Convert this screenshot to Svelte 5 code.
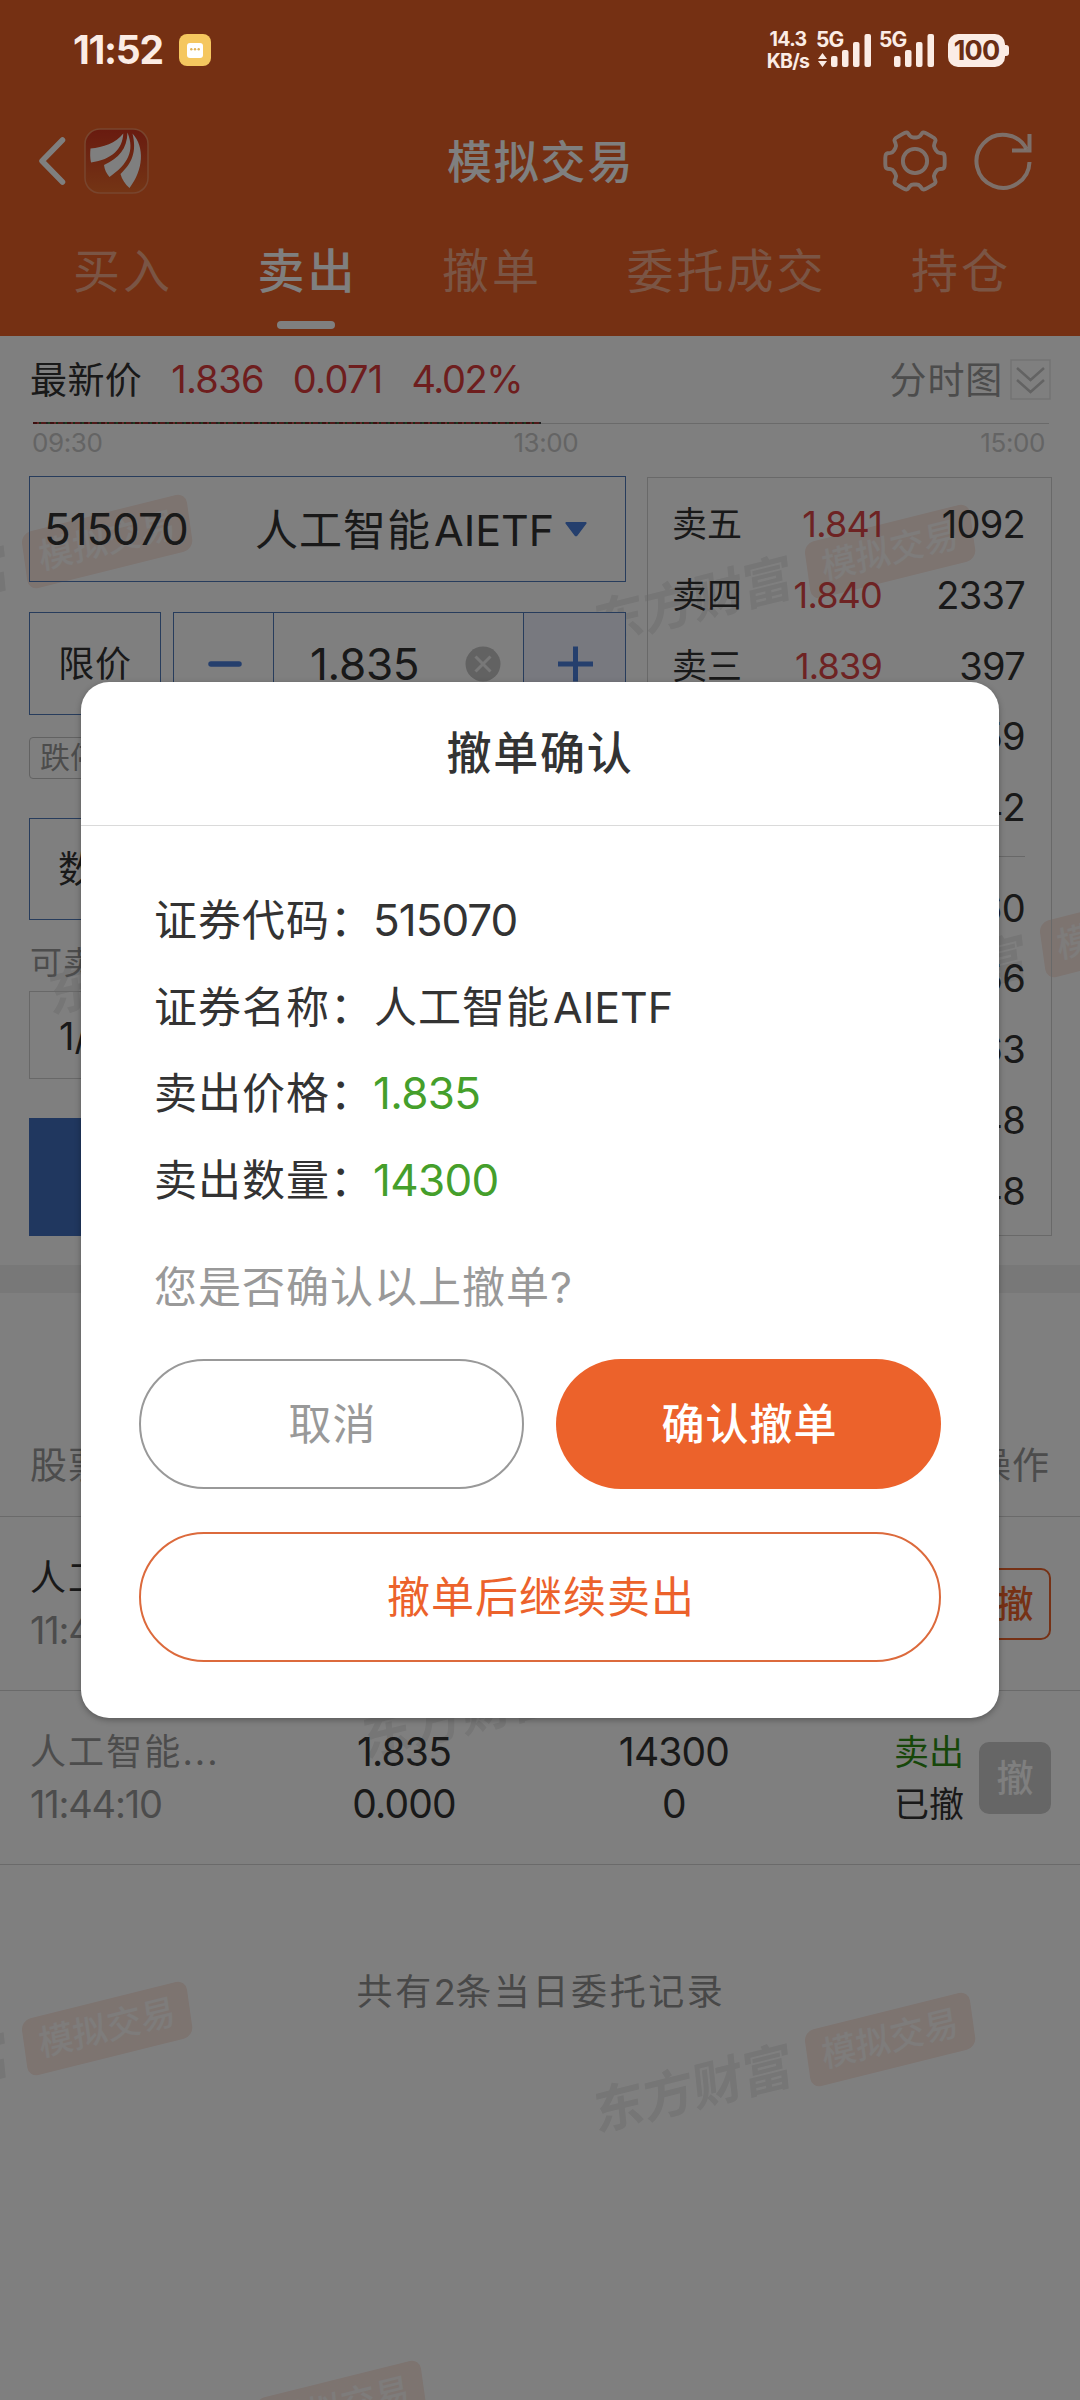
<script lang="ts">
  type Level = { label: string; price: string; volume: string };
  type Order = {
    name: string;
    time: string;
    price: string;
    avg: string;
    qty: string;
    filled: string;
    status: string;
    done: boolean;
  };

  const tabs = ["买入", "卖出", "撤单", "委托成交", "持仓"];
  let activeTab = $state("卖出");

  const asks: Level[] = [
    { label: "卖五", price: "1.841", volume: "1092" },
    { label: "卖四", price: "1.840", volume: "2337" },
    { label: "卖三", price: "1.839", volume: "397" },
    { label: "卖二", price: "1.838", volume: "659" },
    { label: "卖一", price: "1.837", volume: "142" },
  ];

  const bids: Level[] = [
    { label: "买一", price: "1.836", volume: "60" },
    { label: "买二", price: "1.835", volume: "156" },
    { label: "买三", price: "1.834", volume: "163" },
    { label: "买四", price: "1.833", volume: "248" },
    { label: "买五", price: "1.832", volume: "248" },
  ];

  const orders: Order[] = [
    { name: "人工智能", time: "11:44:38", price: "1.835", avg: "0.000", qty: "14300", filled: "0", status: "已报", done: false },
    { name: "人工智能", time: "11:44:10", price: "1.835", avg: "0.000", qty: "14300", filled: "0", status: "已撤", done: true },
  ];

  const details = [
    { label: "证券代码：", value: "515070", num: true, green: false },
    { label: "证券名称：", value: "人工智能", latin: "AIETF", num: false, green: false },
    { label: "卖出价格：", value: "1.835", num: true, green: true },
    { label: "卖出数量：", value: "14300", num: true, green: true },
  ];

  // Centres of the watermark stamps
  const marks = [
    [107, 541],
    [890, 551],
    [344, 921],
    [1125, 930],
    [658, 1665],
    [107, 2028],
    [890, 2039],
    [341, 2407],
  ];

  function gearPath(): string {
    const pts: number[][] = [];
    for (let i = 0; i < 6; i++) {
      for (const [off, r] of [[-21, 24.5], [-14, 31.5], [14, 31.5], [21, 24.5]]) {
        const a = ((i * 60 + off) * Math.PI) / 180;
        pts.push([r * Math.cos(a), r * Math.sin(a)]);
      }
    }
    // Round each corner: cut part of the way in and bend through the point
    const n = pts.length;
    let d = "";
    for (let i = 0; i < n; i++) {
      const p = pts[i];
      const [a, b] = [pts[(i + n - 1) % n], pts[(i + 1) % n]].map((q) => [p[0] + (q[0] - p[0]) * 0.3, p[1] + (q[1] - p[1]) * 0.3]);
      d += `${i ? "L" : "M"}${a[0].toFixed(1)} ${a[1].toFixed(1)}Q${p[0].toFixed(1)} ${p[1].toFixed(1)} ${b[0].toFixed(1)} ${b[1].toFixed(1)}`;
    }
    return d + "Z";
  }
</script>

{#snippet signal()}
  <svg class="signal" width="40" height="33" viewBox="0 0 40 33" fill="currentColor">
    <rect x="0" y="22" width="6.5" height="11" rx="2" />
    <rect x="11" y="16" width="6.5" height="17" rx="2" />
    <rect x="22" y="8" width="6.5" height="25" rx="2" />
    <rect x="33.5" y="0" width="6.5" height="33" rx="2" />
  </svg>
{/snippet}

{#snippet levels(rows: Level[])}
  {#each rows as row}
    <div class="level">
      <span class="level-label">{row.label}</span>
      <span class="level-price">{row.price}</span>
      <span class="level-volume">{row.volume}</span>
    </div>
  {/each}
{/snippet}

<div class="app">
  {#each marks as [x, y]}
    <div class="mark" style:left="{x}px" style:top="{y}px">
      <span class="mark-brand">东方财富</span>
      <span class="mark-stamp">模拟交易</span>
    </div>
  {/each}

  <header>
    <div class="status">
      <span class="clock">11:52</span>
      <svg width="32" height="32" viewBox="0 0 32 32">
        <rect width="32" height="32" rx="8" fill="#f5c75f" />
        <rect x="8" y="9" width="16" height="15" rx="3" fill="#fff" />
        <g fill="#e0b257">
          <circle cx="12.3" cy="15.3" r="1.2" /><circle cx="16" cy="15.3" r="1.2" /><circle cx="19.7" cy="15.3" r="1.2" />
        </g>
      </svg>
      <div class="status-right">
        <div class="speed"><span>14.3</span><span>KB/s</span></div>
        <div class="net">
          <span>5G</span>
          <svg class="updown" width="9" height="14" viewBox="0 0 9 14" fill="currentColor">
            <path d="M4.5 0L9 6H0zM4.5 14L0 8h9z" />
          </svg>
          {@render signal()}
        </div>
        <div class="net">
          <span>5G</span>
          {@render signal()}
        </div>
        <div class="battery"><span>100</span></div>
      </div>
    </div>

    <div class="nav">
      <svg width="28" height="50" viewBox="0 0 28 50" fill="none" stroke="#fff" stroke-width="5.5" stroke-linecap="round" stroke-linejoin="round">
        <path d="M24.5 4L4 25l20.5 21" />
      </svg>
      <svg class="logo" width="66" height="66" viewBox="0 0 66 66">
        <defs>
          <linearGradient id="logo-bg" x1="0" y1="0" x2="0" y2="1">
            <stop offset="0" stop-color="#d2361f" />
            <stop offset="1" stop-color="#e96a2a" />
          </linearGradient>
        </defs>
        <rect x="1" y="1" width="63" height="64" rx="15" fill="url(#logo-bg)" stroke="#f08a5c" stroke-width="1.5" />
        <g fill="#fff">
          <path d="M6.500 20.500C19 19.500 32 15 39.300 5.500C38.500 21 28 31.500 7 34.500C6 30 6 25 6.500 20.500Z" />
          <path d="M43.500 4.500C51 23 44 36 25.500 49C22.500 45.500 20.500 41.500 20 37C35 30 43 21 43.500 4.500Z" />
          <path d="M48.500 5.500C61 19 59.500 42 45.500 60C41 56 38 51.500 36.500 46C48 35 53 24 48.500 5.500Z" />
        </g>
      </svg>
      <h1>模拟交易</h1>
      <svg class="gear" width="66" height="66" viewBox="-34 -34 68 68" fill="none" stroke="#fff" stroke-opacity="0.8" stroke-width="4" stroke-linejoin="round">
        <path d={gearPath()} />
        <circle r="12.5" />
      </svg>
      <svg width="62" height="62" viewBox="-31 -31 62 62" fill="none" stroke="#fff" stroke-opacity="0.8" stroke-width="4">
        <path d="M26.5 1A26.500 26.500 0 1 1 23.500 -12" />
        <path d="M26.500 -27V-10.500H9" />
      </svg>
    </div>

    <nav class="tabs">
      {#each tabs as tab}
        <button class="tab" class:active={tab === activeTab} onclick={() => (activeTab = tab)}>{tab}</button>
      {/each}
    </nav>
  </header>

  <section class="quote">
    <span class="quote-label">最新价</span>
    <span class="quote-num">1.836</span>
    <span class="quote-num">0.071</span>
    <span class="quote-num pct">4.02%</span>
    <span class="chart-link">分时图</span>
    <svg width="41" height="41" viewBox="0 0 41 41" fill="none">
      <rect x="1" y="1" width="39" height="39" stroke="#e6e6e6" stroke-width="1.5" />
      <path d="M7 9l13.500 12L34 9M7 21l13.500 12L34 21" stroke="#c6c6c6" stroke-width="2.5" />
    </svg>
  </section>
  <div class="baseline"><div class="ticks"></div></div>
  <div class="times"><span>09:30</span><span class="noon">13:00</span><span>15:00</span></div>

  <section class="trade">
    <div class="form">
      <div class="box code">
        <span class="code-num">515070</span>
        <span class="code-name">人工智能<em>AIETF</em></span>
        <svg width="22" height="15" viewBox="0 0 22 15"><path d="M1.5 0h19a1 1 0 0 1 1 1.5L12.5 13.5a2 2 0 0 1-3 0L.5 1.5A1 1 0 0 1 1.5 0z" fill="#4a7edb" /></svg>
      </div>
      <div class="price-row">
        <div class="box kind">限价</div>
        <div class="box stepper">
          <svg width="99" height="101" viewBox="0 0 99 101" stroke="#4a7edb" stroke-width="5.5" stroke-linecap="round"><path d="M37 51h28" /></svg>
          <div class="price">
            <span>1.835</span>
            <svg width="36" height="36" viewBox="0 0 36 36">
              <circle cx="18" cy="18" r="17.5" fill="#c4c4c4" />
              <path d="M10.5 10.5l15 15M25.5 10.5l-15 15" stroke="#f0f0f0" stroke-width="3" />
            </svg>
          </div>
          <svg class="plus" width="101" height="101" viewBox="0 0 101 101" stroke="#4a7edb" stroke-width="5"><path d="M34 51h35M51.5 33.5v35" /></svg>
        </div>
      </div>
      <div class="limit">跌停</div>
      <div class="box qty">数量</div>
      <div class="avail">可卖</div>
      <div class="parts">1/4</div>
      <div class="submit"></div>
    </div>
    <div class="book">
      {@render levels(asks)}
      <div class="book-line"></div>
      {@render levels(bids)}
    </div>
  </section>

  <div class="band"></div>

  <section class="orders">
    <div class="orders-head"><span>股票</span><span>操作</span></div>
    {#each orders as order}
      <div class="order" class:done={order.done}>
        <div><span class="name">{order.name}...</span><span class="time">{order.time}</span></div>
        <div class="mid"><span>{order.price}</span><span>{order.avg}</span></div>
        <div class="mid"><span>{order.qty}</span><span>{order.filled}</span></div>
        <div class="side"><span class="sell">卖出</span><span>{order.status}</span></div>
        <button class="cancel">撤</button>
      </div>
    {/each}
    <p class="total">共有<em>2</em>条当日委托记录</p>
  </section>

  <div class="overlay">
    <div class="dialog">
      <h2>撤单确认</h2>
      <div class="dialog-body">
        {#each details as d}
          <div class="detail">
            <span>{d.label}</span>
            <span class:num={d.num} class:green={d.green}>{d.value}{#if d.latin}<em>{d.latin}</em>{/if}</span>
          </div>
        {/each}
        <p>您是否确认以上撤单?</p>
      </div>
      <div class="actions">
        <button class="btn ghost">取消</button>
        <button class="btn primary">确认撤单</button>
        <button class="btn outline">撤单后继续卖出</button>
      </div>
    </div>
  </div>
</div>

<style>
  :global(body) {
    background: #808080;
  }

  .app {
    position: relative;
    width: 1080px;
    height: 2400px;
    overflow: hidden;
    background: #fff;
    color: #333;
    font-family: "Inter", "Noto Sans CJK SC", sans-serif;
    isolation: isolate;
  }

  button {
    font-family: inherit;
    padding: 0;
    margin: 0;
    border: none;
    background: none;
    color: inherit;
  }

  em {
    font-style: normal;
    letter-spacing: -0.5px;
  }

  .mark {
    position: absolute;
    z-index: -1;
    display: flex;
    align-items: center;
    gap: 8px;
    width: 390px;
    margin-left: -305px;
    margin-top: -28px;
    transform: rotate(-14deg);
    transform-origin: 305px 28px;
    white-space: nowrap;
  }

  .mark-brand {
    width: 212px;
    font-size: 51px;
    font-weight: 700;
    line-height: 56px;
    color: #ececec;
    transform: skewX(-8deg);
  }

  .mark-stamp {
    width: 170px;
    height: 57px;
    border-radius: 10px;
    background: #fae8e1;
    color: #fcf8f6;
    font-size: 35px;
    font-weight: 500;
    line-height: 54px;
    text-align: center;
    transform: skewX(-6deg);
  }

  header {
    height: 336px;
    background: #eb6026;
    color: #fff;
  }

  .status {
    position: relative;
    z-index: 20;
    display: flex;
    align-items: center;
    box-sizing: border-box;
    height: 100px;
    padding: 0 71px 0 73px;
    color: #fbece5;
  }

  .clock {
    width: 106px;
    font-size: 39px;
    font-weight: 700;
    letter-spacing: -1.3px;
    line-height: 102px;
  }

  .status-right {
    display: flex;
    align-items: center;
    margin-left: auto;
    font-weight: 700;
    font-size: 21px;
  }

  .speed {
    display: flex;
    flex-direction: column;
    align-items: center;
    width: 42px;
    font-size: 19.5px;
    line-height: 22px;
    letter-spacing: -0.7px;
  }

  .net {
    position: relative;
    width: 56px;
    height: 33px;
    margin-left: 7px;
    line-height: 11px;
    letter-spacing: -1px;
  }

  .net .signal {
    position: absolute;
    right: 1px;
    top: 0;
  }

  .net .updown {
    position: absolute;
    left: 2px;
    bottom: 0;
  }

  .battery {
    position: relative;
    width: 57px;
    height: 33px;
    margin-left: 13px;
    margin-right: 4px;
    border-radius: 10px;
    background: #fbece5;
    color: #6a2d14;
    font-size: 27px;
    font-weight: 700;
    line-height: 33px;
    text-align: center;
    letter-spacing: -0.8px;
  }

  .battery::after {
    content: "";
    position: absolute;
    right: -4px;
    top: 11px;
    width: 5px;
    height: 11px;
    border-radius: 0 3px 3px 0;
    background: #fbece5;
  }

  .nav {
    display: flex;
    align-items: center;
    height: 122px;
    padding: 0 46px 0 38px;
  }

  .logo {
    margin-left: 18px;
  }

  h1 {
    flex: 1;
    margin: 0 0 0 297px;
    padding-bottom: 3px;
    font-size: 45px;
    font-weight: 500;
    letter-spacing: 1.8px;
  }

  .gear {
    margin-right: 24px;
  }

  .tabs {
    display: flex;
    justify-content: space-between;
    box-sizing: border-box;
    height: 114px;
    padding: 14px 69px 0 73px;
  }

  .tab {
    position: relative;
    height: 70px;
    font-size: 47px;
    letter-spacing: 3px;
    line-height: 70px;
    color: #f5ab8b;
  }

  .tab.active {
    font-weight: 500;
    color: #fff;
  }

  .tab.active::after {
    content: "";
    position: absolute;
    left: 50%;
    bottom: -23px;
    width: 58px;
    height: 8px;
    margin-left: -31px;
    border-radius: 4px;
    background: #fff;
  }

  .quote {
    display: flex;
    align-items: center;
    height: 86px;
    padding: 0 29px 0 30px;
    font-size: 37px;
  }

  .quote-label {
    padding-bottom: 2px;
    margin-right: 29px;
    letter-spacing: 0.4px;
  }

  .quote-num {
    margin-right: 29px;
    font-size: 38px;
    letter-spacing: -0.7px;
    color: #dc3c3c;
  }

  .pct {
    letter-spacing: -1.4px;
  }

  .chart-link {
    margin-left: auto;
    margin-right: 7px;
    padding-bottom: 2px;
    letter-spacing: 0.8px;
    color: #999;
  }

  .baseline {
    height: 2px;
    margin: 0 31px 0 33px;
    background: linear-gradient(#fff 1px, #d4d4d4 1px);
  }

  .ticks {
    width: 508px;
    height: 2px;
    background: repeating-linear-gradient(90deg, #7a2020 0 4px, #c04a4a 4px 6px, #2c5c2c 6px 8px, #a03434 8px 13px, #444 13px 15px, #3f7a3f 15px 17px);
  }

  .times {
    display: flex;
    justify-content: space-between;
    height: 36px;
    padding: 0 35px 0 32px;
    font-size: 26px;
    line-height: 37px;
    letter-spacing: -0.4px;
    color: #c9c9c9;
  }

  .noon {
    padding-left: 9px;
  }

  .trade {
    display: flex;
    align-items: flex-start;
    justify-content: space-between;
    margin: 16px 28px 0 29px;
  }

  .form {
    width: 597px;
  }

  .box {
    box-sizing: border-box;
    border: 1.5px solid #4e79b8;
  }

  .code {
    display: flex;
    align-items: center;
    height: 106px;
    padding-left: 14px;
    font-size: 43px;
  }

  .code-num {
    width: 211px;
    font-size: 44px;
    letter-spacing: -1.1px;
  }

  .code-name {
    width: 310px;
    padding-bottom: 5px;
    white-space: nowrap;
    letter-spacing: 1px;
  }

  .code-name em {
    margin-left: 3px;
    letter-spacing: 0;
  }

  .price-row {
    display: flex;
    justify-content: space-between;
    margin-top: 30px;
  }

  .kind {
    width: 132px;
    height: 103px;
    font-size: 36px;
    line-height: 102px;
    letter-spacing: 0.8px;
    text-align: center;
  }

  .stepper {
    display: flex;
    width: 453px;
    height: 103px;
  }

  .price {
    display: flex;
    flex: 1;
    align-items: center;
    justify-content: space-between;
    padding: 0 22px 0 36px;
    border: solid #4e79b8;
    border-width: 0 1.5px;
    font-size: 44px;
    letter-spacing: -0.3px;
  }

  .plus {
    background: #f0f3ff;
  }

  .limit {
    box-sizing: border-box;
    width: 82px;
    height: 42px;
    margin-top: 22px;
    padding-left: 10px;
    border: 1.5px solid #c4c4c4;
    border-radius: 4px;
    font-size: 30px;
    line-height: 39px;
    color: #999;
  }

  .qty {
    height: 102px;
    margin-top: 39px;
    padding-left: 28px;
    font-size: 37px;
    line-height: 101px;
  }

  .avail {
    height: 40px;
    margin-top: 23px;
    padding-left: 1px;
    font-size: 32px;
    letter-spacing: 1px;
    line-height: 40px;
    color: #999;
  }

  .parts {
    box-sizing: border-box;
    width: 140px;
    height: 88px;
    margin-top: 8px;
    padding-left: 29px;
    border: 1.5px solid #d0d0d0;
    font-size: 38px;
    line-height: 88px;
  }

  .submit {
    height: 118px;
    margin-top: 39px;
    background: #406fbf;
  }

  .book {
    box-sizing: border-box;
    width: 405px;
    height: 759px;
    margin-top: 1px;
    padding: 11px 26px 0 24px;
    border: 1.5px solid #d2d2d2;
  }

  .level {
    display: flex;
    align-items: center;
    height: 70.7px;
    font-size: 35px;
  }

  .level-label {
    width: 80px;
    padding-bottom: 5px;
  }

  .level-price {
    width: 130px;
    text-align: right;
    font-size: 36px;
    letter-spacing: -0.8px;
    color: #dc4646;
  }

  .level-volume {
    flex: 1;
    text-align: right;
    font-size: 38px;
    letter-spacing: -0.7px;
  }

  .book-line {
    height: 1px;
    margin: 14px 0 15px;
    background: #d0d0d0;
  }

  .band {
    height: 28px;
    margin-top: 29px;
    background: #f0f0f0;
  }

  .orders {
    padding-top: 121px;
  }

  .orders-head {
    display: flex;
    justify-content: space-between;
    height: 102px;
    padding: 0 30px;
    border-bottom: 1.5px solid #d4d4d4;
    font-size: 37px;
    line-height: 103px;
    letter-spacing: 1px;
    color: #999;
  }

  .order {
    display: grid;
    grid-template-columns: 238px 270px 270px 155px 87px;
    align-items: center;
    box-sizing: border-box;
    height: 174px;
    padding: 0 29px 0 31px;
    border-bottom: 1.5px solid #d4d4d4;
    font-size: 39px;
    line-height: 52px;
    letter-spacing: -0.8px;
  }

  .order span {
    display: block;
  }

  .order .name {
    margin-left: -1px;
    font-size: 36px;
    letter-spacing: 2.1px;
  }

  .order .time {
    margin-left: -1px;
    font-size: 38px;
    letter-spacing: -1.2px;
    color: #999;
  }

  .mid {
    padding-top: 1px;
    text-align: center;
  }

  .order.done .name {
    color: #999;
  }

  .side {
    font-size: 35px;
    letter-spacing: 0;
    text-align: right;
  }

  .sell {
    color: #2f8f14;
  }

  .cancel {
    justify-self: end;
    box-sizing: border-box;
    width: 72px;
    height: 72px;
    padding-bottom: 3px;
    border: 2px solid #ec622b;
    border-radius: 10px;
    font-size: 37px;
    font-weight: 500;
    color: #ec622b;
  }

  .done .cancel {
    border-color: #ccc;
    background: #ccc;
    color: #fff;
  }

  .total {
    margin: 96px 0 0;
    padding-left: 2px;
    text-align: center;
    font-size: 36px;
    line-height: 62px;
    letter-spacing: 2.6px;
    color: #909090;
  }

  .overlay {
    position: absolute;
    inset: 0;
    z-index: 10;
    background: rgba(0, 0, 0, 0.5);
  }

  .dialog {
    box-sizing: border-box;
    width: 918px;
    height: 1036px;
    margin: 682px auto 0;
    border-radius: 28px;
    background: #fff;
    box-shadow: 0 2px 6px rgba(0, 0, 0, 0.3);
  }

  h2 {
    margin: 0;
    height: 143px;
    border-bottom: 1.5px solid #dadada;
    font-size: 45px;
    font-weight: 500;
    line-height: 143px;
    letter-spacing: 1.8px;
    text-align: center;
  }

  .dialog-body {
    padding: 51px 73px 0;
    font-size: 43px;
    letter-spacing: 1px;
  }

  .detail {
    display: flex;
    height: 86.5px;
    line-height: 86px;
  }

  .detail em {
    margin-left: 3px;
    letter-spacing: 0;
  }

  .num {
    margin-left: -1px;
    font-size: 44px;
    letter-spacing: -1px;
  }

  .green {
    letter-spacing: -0.7px;
    color: #459f2b;
  }

  .dialog-body p {
    margin: 21px 0 0;
    line-height: 86px;
    color: #999;
  }

  .actions {
    display: flex;
    flex-wrap: wrap;
    justify-content: space-between;
    row-gap: 43px;
    padding: 29px 58px 0;
  }

  .btn {
    box-sizing: border-box;
    width: 385px;
    height: 130px;
    padding: 0 0 6px 2px;
    border-radius: 65px;
    font-size: 43px;
    letter-spacing: 1px;
  }

  .ghost {
    border: 2px solid #999;
    color: #999;
  }

  .primary {
    background: #ec622b;
    color: #fff;
    font-weight: 500;
  }

  .outline {
    width: 100%;
    border: 2px solid #dc6a3c;
    color: #ec622b;
  }
</style>
